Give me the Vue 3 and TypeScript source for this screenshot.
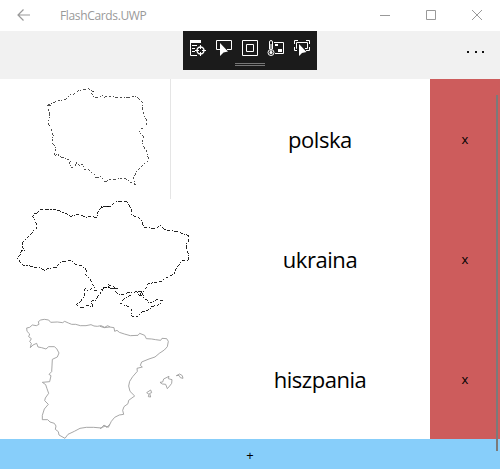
<script setup lang="ts">
interface Outline {
  x: number
  y: number
  d: string
}
interface Card {
  name: string
  tone: string
  outlines: Outline[]
}

// Each outline is traced on a grid of three units per pixel.
const cards: Card[] = [
  {
    name: 'polska',
    tone: 'dotted',
    outlines: [
      {
        x: 35,
        y: 1,
        d: 'M38 73L44 75L49 70L59 66L72 62L88 59L99 54L104 44L116 42L127 34L144 28L161 26L168 29L170 35L178 35L169 38L172 46L181 52L194 54L199 46L204 48L207 52L218 49L229 50L253 52L279 52L302 50L308 54L316 61L322 68L323 84L325 98L329 108L334 120L334 137L324 143L315 150L311 157L319 162L326 171L323 184L324 194L329 204L336 215L338 227L341 240L333 248L321 257L308 270L302 282L295 290L297 298L301 315L293 311L284 305L273 297L262 294L246 297L238 300L228 297L218 299L216 306L208 303L205 296L196 290L191 294L181 291L178 283L169 276L159 268L147 267L146 255L140 252L136 259L125 247L119 259L111 264L103 253L107 241L97 237L85 232L73 230L68 220L61 227L58 220L63 214L62 199L54 192L51 182L55 168L50 158L51 143L43 137L37 127L43 119L43 99L40 86L48 78L39 78Z',
      },
    ],
  },
  {
    name: 'ukraina',
    tone: 'dark',
    outlines: [
      {
        x: 5,
        y: -4,
        d: 'M312 34L291 34L284 43L277 56L276 67L266 66L255 64L245 68L231 61L217 58L198 64L184 56L171 51L154 44L131 43L107 43L99 53L88 56L83 65L91 80L96 92L94 102L84 109L76 119L66 129L54 140L52 148L54 160L60 166L49 166L46 178L37 188L43 198L54 210L70 211L85 216L102 217L110 221L120 226L129 221L143 219L154 218L161 207L171 199L184 199L198 196L205 204L219 211L230 213L239 218L244 227L241 238L248 246L256 253L260 263L265 273L275 286L267 285L258 281L248 286L240 281L239 292L237 303L231 313L223 323L215 328L221 337L235 337L246 331L262 337L260 317L272 316L277 306L286 298L288 286L298 277L312 279L312 268',
      },
      {
        x: 100,
        y: -4,
        d: 'M2 39L13 34L25 34L36 33L42 24L54 19L69 18L83 20L88 33L94 44L92 57L104 65L117 68L125 76L127 87L132 97L144 98L158 100L170 99L181 92L191 101L205 107L221 108L236 111L250 117L265 121L266 138L259 146L260 160L265 178L264 195L247 196L239 207L230 216L224 235L209 243L194 251L185 259L171 261L157 264L143 267L139 279L132 288L121 291L110 289L98 294L84 293L72 297L59 298L48 292L40 281L31 280L25 269L32 273L44 277L54 281L38 280L23 278L10 278L5 291M92 301L78 307L66 317L61 325L73 330L87 335L95 345L92 361L104 367L115 362L124 352L137 347L149 344L154 334L169 332L181 327L188 317L173 313L160 319L149 325L141 316L132 308L125 291L119 298L130 301L118 303L110 289',
      },
    ],
  },
  {
    name: 'hiszpania',
    tone: 'grey',
    outlines: [
      {
        x: 15,
        y: -4,
        d: 'M285 36L278 32L269 37L258 32L247 34L237 33L228 29L213 32L196 32L182 28L170 28L160 24L149 19L143 23L127 21L107 22L101 15L88 13L77 15L70 20L72 28L64 32L52 30L44 37L35 39L36 49L44 57L41 65L49 71L44 80L49 85L46 98L54 90L65 85L69 96L80 98L93 102L101 95L118 95L125 101L132 114L127 126L112 133L111 153L110 170L102 178L108 182L104 200L82 202L92 209L96 221L101 235L91 249L89 257L100 268L88 282L82 301L82 314L98 314L105 321L118 325L123 333L121 343L130 350L132 360L150 370L159 358L178 349L195 340L214 337L236 337L259 339L267 330L275 337L285 328',
      },
      {
        x: 100,
        y: -4,
        d: 'M0 34L13 38L29 36L42 38L44 49L51 46L58 52L73 57L91 62L114 61L119 55L134 61L139 71L155 72L167 74L182 76L186 70L200 71L205 79L202 95L193 105L178 115L165 126L147 132L125 141L121 151L127 156L111 160L112 169L98 185L89 199L86 213L90 229L104 243L86 256L84 266L72 275L68 286L71 298L58 300L44 307L34 319L25 337L16 333L7 337L0 341M140 233L152 225L155 233L149 235L152 246L145 245L147 238ZM180 202L188 201L191 192L207 184L205 191L216 194L215 205L209 213L202 221L197 208L187 207ZM229 182L239 177L247 182L249 190L241 188L237 181Z',
      },
    ],
  },
]
</script>

<template>
  <main class="window">
    <header class="titlebar">
      <svg class="back" width="14" height="12" viewBox="0 0 14 12"><path d="M6.5 .5L1 6L6.5 11.5M1 6H13" /></svg>
      <span class="title">FlashCards.UWP</span>
      <div class="controls">
        <svg width="12" height="12" viewBox="0 0 12 12"><path d="M1 6.5H11" /></svg>
        <svg width="12" height="12" viewBox="0 0 12 12"><path d="M1.5 1.5H10.5V10.5H1.5Z" /></svg>
        <svg width="12" height="12" viewBox="0 0 12 12"><path d="M1 1L11 11M11 1L1 11" /></svg>
      </div>
    </header>

    <nav class="commands">
      <div class="debug">
        <div class="tools">
          <svg width="18" height="18" viewBox="0 0 18 18">
            <path class="fill" d="M1 1H12V4H1Z" />
            <path d="M1.5 1V16.5H8M3 6.5H8M3 9.5H6M3 12.5H6" />
            <circle cx="11.5" cy="11.5" r="3.5" stroke-width="1.4" />
            <path d="M11.5 6V10M11.5 13V17M6 11.5H10M13 11.5H17" />
          </svg>
          <svg width="18" height="18" viewBox="0 0 18 18">
            <path d="M5 10.5H1.5V1.5H16.5V10.5H12" />
            <path class="fill" d="M5 4V17L8.5 13.500L13 12.5Z" />
          </svg>
          <svg width="18" height="18" viewBox="0 0 18 18"><path d="M1.5 1.5H16.5V16.5H1.5ZM5.500 5.500H12.5V12.5H5.500Z" /></svg>
          <svg width="18" height="18" viewBox="0 0 18 18">
            <path d="M2.500 10V3Q2.500 1.500 4 1.500Q5.500 1.500 5.500 3V10" />
            <circle cx="4" cy="13.500" r="3" />
            <circle class="fill" cx="4" cy="13.500" r="1.500" />
            <path d="M4 5V13M7 3.500H16.500V14.500H8" />
            <path class="fill" d="M8 5H11V7H8ZM11 10H15V13H11Z" />
          </svg>
          <svg width="18" height="18" viewBox="0 0 18 18">
            <path d="M1.500 5V1.500H5M13 1.500H16.500V5M1.500 8V11.500H4M13 11.500H16.500V8M4 9.500H3.500V3.500H14.500V9.500H12" />
            <path class="fill" d="M6 5V17L9 14L13.500 13Z" />
          </svg>
        </div>
        <div class="grip"></div>
      </div>
      <svg class="more" width="20" height="4" viewBox="0 0 20 4"><path d="M1 1H3V3H1ZM9 1H11V3H9ZM16 1H18V3H16Z" /></svg>
    </nav>

    <section class="list">
      <article v-for="card in cards" :key="card.name" class="card">
        <svg class="map" :class="card.tone" width="200" height="120" viewBox="0 0 200 120">
          <g v-for="(o, i) in card.outlines" :key="i" :transform="`translate(${o.x} ${o.y}) scale(0.33333)`">
            <path :d="o.d" />
          </g>
          <path v-if="card.tone === 'dotted'" class="edge" d="M170.500 0V120" />
        </svg>
        <span class="name">{{ card.name }}</span>
        <button class="remove">x</button>
      </article>
    </section>
    <button class="add">+</button>
    <div class="scrollbar"></div>
  </main>
</template>

<style>
body {
  background: #fff;
}
</style>

<style scoped>
.window {
  position: relative;
  width: 500px;
  height: 469px;
  overflow: hidden;
  display: flex;
  flex-direction: column;
  background: #fff;
  color: #000;
  font-family: "Open Sans", "Noto Sans", sans-serif;
}
svg {
  display: block;
  fill: none;
}
button {
  border: 0;
  padding: 0;
  font: inherit;
  color: #000;
}
.titlebar {
  height: 31px;
  display: flex;
  align-items: center;
  padding: 0 17px;
  box-sizing: border-box;
  stroke: #999;
}
.back {
  margin-top: -2px;
  stroke-width: 1.2;
}
.title {
  margin-left: 29px;
  font-size: 12px;
  line-height: 30px;
  letter-spacing: -0.35px;
  color: #999;
}
.controls {
  margin-left: auto;
  margin-top: -1px;
  display: flex;
  gap: 34px;
}
.commands {
  height: 48px;
  display: flex;
  background: #f1f1f1;
}
.debug {
  margin-left: 183px;
  width: 134px;
  height: 39px;
  background: #1b1b1b;
}
.tools {
  display: flex;
  gap: 8px;
  padding: 8px 6px 0;
  stroke: #fff;
}
.fill {
  fill: #fff;
  stroke: none;
}
.grip {
  width: 30px;
  height: 1px;
  margin: 6px auto 0;
  border-top: 1px solid #777;
  border-bottom: 1px solid #777;
}
.more {
  margin: 19px 14px 0 auto;
  fill: #111;
}
.list {
  display: flex;
  flex-direction: column;
}
.card {
  height: 120px;
  display: grid;
  grid-template-columns: 210px 220px 70px;
}
.map {
  overflow: visible;
  stroke-width: 2.6;
}
.dotted {
  stroke: #222;
  stroke-width: 2.4;
  stroke-dasharray: 6 5 3 4 10 6;
  shape-rendering: crispEdges;
}
.dark {
  stroke: #000;
  stroke-dasharray: 9 4 4 4 12 5;
  shape-rendering: crispEdges;
}
.grey {
  stroke: #999;
}
.edge {
  stroke: #e5e5e5;
  stroke-width: 1;
  stroke-dasharray: none;
}
.name {
  text-align: center;
  font-size: 22px;
  line-height: 121px;
  letter-spacing: -0.45px;
}
.remove {
  padding-bottom: 2px;
  background: #cd5c5c;
  font-size: 13px;
}
.add {
  height: 30px;
  padding-top: 2px;
  background: #87cefa;
  font-size: 13px;
}
.scrollbar {
  position: absolute;
  top: 95px;
  right: 2px;
  width: 2px;
  height: 356px;
  background: #7a7a7a;
}
</style>
